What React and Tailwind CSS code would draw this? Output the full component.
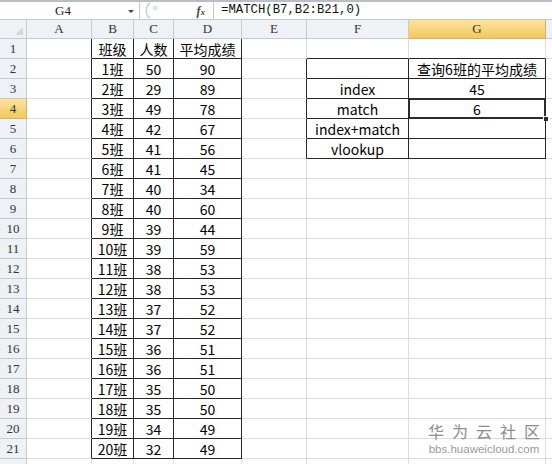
import React from "react";

const COLS = ["A", "B", "C", "D", "E", "F", "G"];
const COL_W = [65, 42, 40, 68, 65, 102, 137];

const counts = [50, 29, 49, 42, 41, 41, 40, 40, 39, 39, 38, 38, 37, 37, 36, 36, 35, 35, 34, 32];
const scores = [90, 89, 78, 67, 56, 45, 34, 60, 44, 59, 53, 53, 52, 52, 51, 51, 50, 50, 49, 49];

// sheet contents keyed by "row,col" (col index 0 = A)
const cells = {};
cells["1,1"] = "班级";
cells["1,2"] = "人数";
cells["1,3"] = "平均成绩";
for (let i = 0; i < 20; i++) {
  cells[`${i + 2},1`] = `${i + 1}班`;
  cells[`${i + 2},2`] = String(counts[i]);
  cells[`${i + 2},3`] = String(scores[i]);
}
cells["2,6"] = "查询6班的平均成绩";
cells["3,5"] = "index";
cells["3,6"] = "45";
cells["4,5"] = "match";
cells["4,6"] = "6";
cells["5,5"] = "index+match";
cells["6,5"] = "vlookup";

// bordered ranges
const inTable = (r, c) =>
  (r >= 1 && r <= 21 && c >= 1 && c <= 3) || (r >= 2 && r <= 6 && c >= 5 && c <= 6);

const ROWS = Array.from({ length: 22 }, (_, i) => i + 1);

function Cell({ r, c }) {
  const right = inTable(r, c) || inTable(r, c + 1);
  const bottom = inTable(r, c) || inTable(r + 1, c);
  const selected = r === 4 && c === 6;
  const text = cells[`${r},${c}`];
  return (
    <div
      className={`relative h-[20px] flex items-center justify-center whitespace-nowrap text-[14px] leading-[20px] text-black border-r border-b ${
        right ? "border-r-[#262626]" : "border-r-[#dadcdd]"
      } ${bottom ? "border-b-[#262626]" : "border-b-[#dadcdd]"}`}
      style={{ fontFamily: '"Noto Sans CJK SC", "Noto Sans", sans-serif' }}
    >
      {text}
      {selected && (
        <>
          <div className="absolute left-[-1px] top-[-1px] right-[-1px] bottom-[-1px] border-2 border-[#2b2b2b] pointer-events-none" />
          <div className="absolute right-[-4px] bottom-[-4px] w-[6px] h-[6px] bg-[#2b2b2b] border border-white" />
        </>
      )}
    </div>
  );
}

export default function App() {
  const serif = { fontFamily: '"Liberation Serif", "DejaVu Serif", serif' };
  const gridCols = `27px ${COL_W.map((w) => w + "px").join(" ")} 1fr`;
  return (
    <div className="relative w-[552px] h-[464px] overflow-hidden bg-white">
      {/* formula bar */}
      <div className="h-[20px] flex items-stretch border-t-2 border-t-[#b8bec7] border-b border-b-[#c3c8cf] bg-white">
        <div className="w-[140px] flex items-center border-r border-[#c3c8cf]">
          <div
            className="flex-1 text-center text-[13px] text-[#222] leading-none"
            style={serif}
          >
            G4
          </div>
          <svg width="10" height="10" viewBox="0 0 10 10" className="mr-[3px]">
            <path d="M2 4 L8 4 L5 7 Z" fill="#444" />
          </svg>
        </div>
        <div className="w-[74px] flex items-center pl-[3px] border-r border-[#c3c8cf]">
          <svg width="22" height="17" viewBox="0 0 22 17">
            <path d="M7 1 C2 4 2 13 7 16" stroke="#c9ced6" strokeWidth="1.5" fill="none" />
            <circle cx="12" cy="6" r="2" fill="#e3e6ea" stroke="#cfd3d9" strokeWidth="0.7" />
          </svg>
          <span
            className="ml-auto mr-[8px] text-[12px] italic font-bold text-[#444] leading-none"
            style={serif}
          >
            f<span className="text-[9px]">x</span>
          </span>
        </div>
        <div
          className="flex items-center pl-[7px] text-[12.3px] text-[#111] leading-none"
          style={{ fontFamily: '"Liberation Mono", monospace' }}
        >
          =MATCH(B7,B2:B21,0)
        </div>
      </div>

      {/* sheet grid */}
      <div className="grid" style={{ gridTemplateColumns: gridCols }}>
        {/* column headers */}
        <div className="h-[19px] relative bg-[#eef1f5] border-r border-b border-[#c5cad1]">
          <svg width="8" height="8" viewBox="0 0 8 8" className="absolute right-[3px] bottom-[3px]">
            <path d="M8 0 L8 8 L0 8 Z" fill="#d4d8de" />
          </svg>
        </div>
        {COLS.map((col, i) => (
          <div
            key={col}
            className={`h-[19px] flex items-center justify-center text-[13px] border-r border-b ${
              i === 6
                ? "bg-gradient-to-b from-[#fbe39f] to-[#f3c85a] border-[#e0b24a] text-[#333]"
                : "bg-[#eef1f5] border-[#c5cad1] text-[#333]"
            }`}
            style={serif}
          >
            {col}
          </div>
        ))}
        <div className="h-[19px] bg-[#eef1f5] border-b border-[#c5cad1]" />

        {ROWS.map((r) => (
          <React.Fragment key={r}>
            <div
              className={`h-[20px] flex items-center justify-center text-[13px] border-r border-b ${
                r === 4
                  ? "bg-gradient-to-b from-[#fbe39f] to-[#f3c85a] border-[#e0b24a] text-[#333]"
                  : "bg-[#eef1f5] border-[#c5cad1] text-[#333]"
              }`}
              style={serif}
            >
              {r <= 21 ? r : ""}
            </div>
            {COLS.map((_, c) => (
              <Cell key={c} r={r} c={c} />
            ))}
            <div className="h-[20px] border-b border-[#dadcdd]" />
          </React.Fragment>
        ))}
      </div>

      {/* site watermark */}
      <div className="absolute left-[428px] w-[112px] top-[423px] flex flex-col items-center gap-[4px] pointer-events-none whitespace-nowrap">
        <div
          className="text-[16px] leading-[16px] tracking-[8px] mr-[-8px] text-[#8c8c8c]"
          style={{ fontFamily: '"Noto Sans CJK SC", sans-serif' }}
        >
          华为云社区
        </div>
        <div
          className="text-[11.5px] leading-[12px] text-[#9a9a9a]"
          style={{ fontFamily: '"Liberation Sans", sans-serif' }}
        >
          bbs.huaweicloud.com
        </div>
      </div>
    </div>
  );
}
